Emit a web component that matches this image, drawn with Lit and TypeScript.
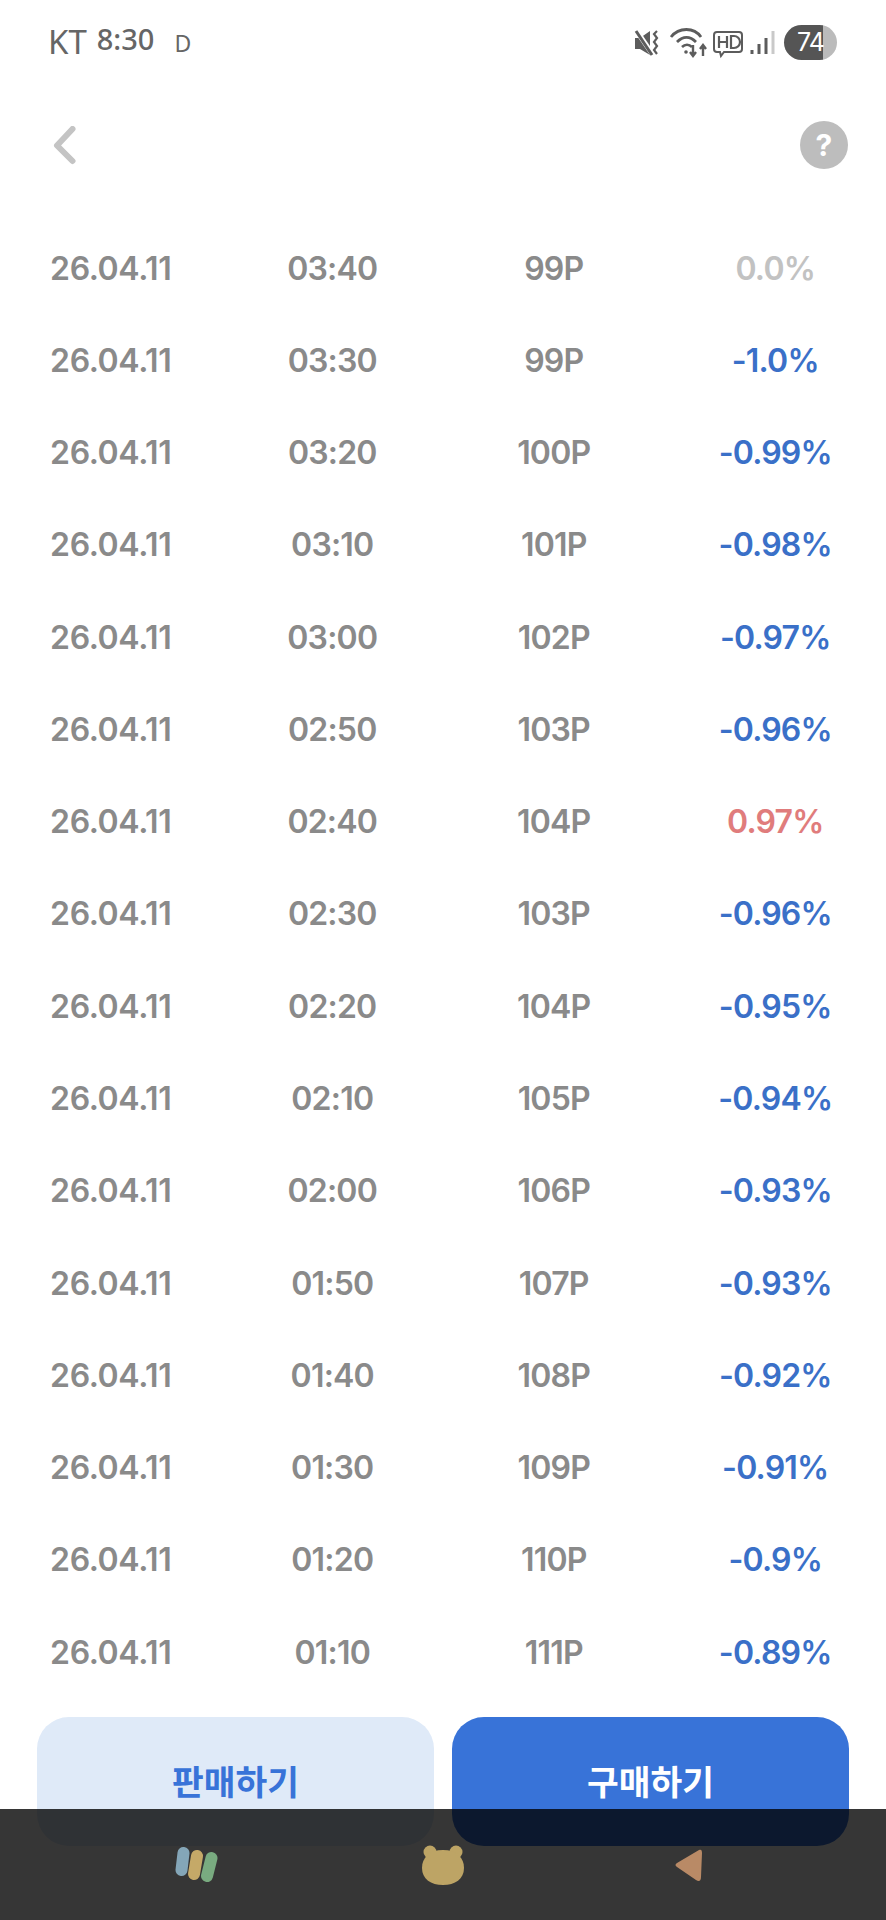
import { LitElement, html, css } from 'lit';
import { customElement } from 'lit/decorators.js';
import { classMap } from 'lit/directives/class-map.js';

const rows: [string, string, string][] = [
  ['03:40', '99P', '0.0%'],
  ['03:30', '99P', '-1.0%'],
  ['03:20', '100P', '-0.99%'],
  ['03:10', '101P', '-0.98%'],
  ['03:00', '102P', '-0.97%'],
  ['02:50', '103P', '-0.96%'],
  ['02:40', '104P', '0.97%'],
  ['02:30', '103P', '-0.96%'],
  ['02:20', '104P', '-0.95%'],
  ['02:10', '105P', '-0.94%'],
  ['02:00', '106P', '-0.93%'],
  ['01:50', '107P', '-0.93%'],
  ['01:40', '108P', '-0.92%'],
  ['01:30', '109P', '-0.91%'],
  ['01:20', '110P', '-0.9%'],
  ['01:10', '111P', '-0.89%'],
];

@customElement('app-root')
export class AppRoot extends LitElement {
  static styles = css`
    :host {
      display: block;
      position: relative;
      width: 886px;
      height: 1920px;
      overflow: hidden;
      background: #fff;
      font-family: Inter, "Noto Sans CJK KR", sans-serif;
    }
    .status {
      height: 85px;
      display: flex;
      justify-content: space-between;
      padding: 0 49px 0 48px;
      box-sizing: border-box;
      color: #666;
    }
    .status-left {
      display: flex;
      align-items: flex-start;
      font-family: "Noto Sans", sans-serif;
    }
    .carrier {
      font-size: 33px;
      line-height: 38px;
      margin-top: 23px;
    }
    .clock {
      font-size: 29px;
      line-height: 34px;
      margin: 22px 0 0 10px;
      font-weight: 500;
    }
    .mode {
      font-size: 23px;
      line-height: 28px;
      margin: 29px 0 0 20px;
    }
    .status-right {
      display: flex;
      align-items: flex-start;
      margin-top: 25px;
    }
    .status-right svg {
      display: block;
    }
    .battery {
      width: 53px;
      height: 35px;
      border-radius: 18px;
      margin-left: 7px;
      background: linear-gradient(90deg, #555 0 39px, #bbb 39px);
      color: #fff;
      font-size: 25px;
      font-weight: 400;
      line-height: 35px;
      padding-left: 13px;
      box-sizing: border-box;
      letter-spacing: -1px;
    }
    .header {
      height: 120px;
      display: flex;
      align-items: center;
      justify-content: space-between;
      padding: 0 38px 0 52px;
    }
    .back {
      margin-top: 2px;
    }
    .help {
      width: 48px;
      height: 48px;
      border-radius: 50%;
      background: #bdbdbd;
      color: #fff;
      font-size: 30px;
      font-weight: 700;
      line-height: 48px;
      text-align: center;
    }
    .list {
      margin-top: 17px;
    }
    .row {
      display: grid;
      grid-template-columns: repeat(4, 221.5px);
      height: 92.27px;
      align-items: center;
      justify-items: center;
      color: #8a8a8a;
      font-size: 32px;
      font-weight: 600;
      letter-spacing: -0.8px;
    }
    .date {
      letter-spacing: -0.4px;
    }
    .up {
      color: #e07c7c;
    }
    .down {
      color: #3a70c8;
    }
    .flat {
      color: #c2c2c2;
    }
    .actions {
      display: flex;
      gap: 18px;
      padding: 0 37px;
      margin-top: 19px;
    }
    .btn {
      flex: 1;
      height: 129px;
      border-radius: 32px;
      box-sizing: border-box;
      padding-top: 40px;
      text-align: center;
      font-family: "Noto Sans CJK KR", sans-serif;
      font-size: 34.5px;
      font-weight: 700;
      line-height: 46px;
    }
    .sell {
      background: #dfeaf8;
      color: #3873d8;
    }
    .buy {
      background: #3873d8;
      color: #fff;
    }
    .nav {
      position: absolute;
      left: 0;
      right: 0;
      bottom: 0;
      height: 111px;
      background: rgba(0, 0, 0, 0.79);
      display: flex;
      align-items: center;
      justify-content: space-between;
      padding: 0 182px 0 175px;
    }
    .bear {
      margin-left: -6px;
    }
  `;

  private pctClass(p: string) {
    return {
      flat: p === '0.0%',
      down: p.startsWith('-'),
      up: p !== '0.0%' && !p.startsWith('-'),
    };
  }

  render() {
    return html`
      <div class="status">
        <div class="status-left">
          <span class="carrier">KT</span>
          <span class="clock">8:30</span>
          <span class="mode">D</span>
        </div>
        <div class="status-right">
          <svg width="143" height="35" viewBox="0 0 143 35" fill="none" stroke="#5c5c5c">
            <!-- mute -->
            <path d="M1 13h5l10-7v24l-10-6H1z" fill="#5c5c5c" stroke="none" />
            <path d="M2 5l17 25" stroke="#fff" stroke-width="5" />
            <path d="M2 6l16 24" stroke-width="3" />
            <path d="M23 6l-3 3 3 4-3 4 3 4-3 4 3 4" stroke-width="2.2" />
            <!-- wifi -->
            <path d="M37 12C45 2 60 2 67 12" stroke-width="2.8" />
            <path d="M43 17C49 11 56 11 62 17" stroke-width="2.8" />
            <path d="M48 22c3-3 7-3 10 0" stroke-width="2.6" />
            <circle cx="52" cy="27" r="1.8" fill="#5c5c5c" stroke="none" />
            <path d="M59 20v11M56 27l3 4 3-4M69 31V20M66 24l3-4 3 4" stroke-width="2.4" />
            <!-- hd -->
            <path d="M83 7h22a3 3 0 0 1 3 3v14a3 3 0 0 1-3 3H90l-3 4-1-4h-3a3 3 0 0 1-3-3V10a3 3 0 0 1 3-3z" stroke-width="2" />
            <path d="M85 11v12M93 11v12M85 17h8M97 11v12h3a5 5 0 0 0 0-12z" stroke-width="2.2" />
            <!-- signal -->
            <path d="M118 25v4M125 19v10M132 13v16" stroke-width="3" />
            <path d="M139 6v23" stroke="#c9c9c9" stroke-width="3" />
          </svg>
          <div class="battery">74</div>
        </div>
      </div>
      <div class="header">
        <svg class="back" width="24" height="40" viewBox="0 0 24 40" fill="none">
          <path d="M20.5 3 5 19.5 20.5 35" stroke="#c4c4c4" stroke-width="6" stroke-linecap="round" stroke-linejoin="round" />
        </svg>
        <div class="help">?</div>
      </div>
      <div class="list">
        ${rows.map(
          ([time, price, pct]) => html`
            <div class="row">
              <span class="date">26.04.11</span>
              <span>${time}</span>
              <span>${price}</span>
              <span class=${classMap(this.pctClass(pct))}>${pct}</span>
            </div>
          `
        )}
      </div>
      <div class="actions">
        <div class="btn sell">판매하기</div>
        <div class="btn buy">구매하기</div>
      </div>
      <div class="nav">
        <svg width="44" height="36" viewBox="0 0 44 36" fill="none" stroke-linecap="round" stroke-width="12">
          <path d="M8.5 6 6.5 23" stroke="#84a6b8" />
          <path d="M22 9 19 27" stroke="#c5a968" />
          <path d="M36.5 11 32 29" stroke="#79ab80" />
        </svg>
        <svg class="bear" width="44" height="40" viewBox="0 0 44 40">
          <circle cx="9" cy="7" r="6.5" fill="#bda465" />
          <circle cx="35" cy="7" r="6.5" fill="#bda465" />
          <path d="M22 5c14 0 21 8 21 18 0 11-9 17-21 17S1 34 1 23C1 13 8 5 22 5z" fill="#bda465" />
        </svg>
        <svg width="31" height="36" viewBox="0 0 31 36">
          <path d="M26 3 4 16c-2 1-2 3 0 4l19 13c3 2 5 1 5-3l1-24c0-3-1-4-3-3z" fill="#b98a66" />
        </svg>
      </div>
    `;
  }
}
